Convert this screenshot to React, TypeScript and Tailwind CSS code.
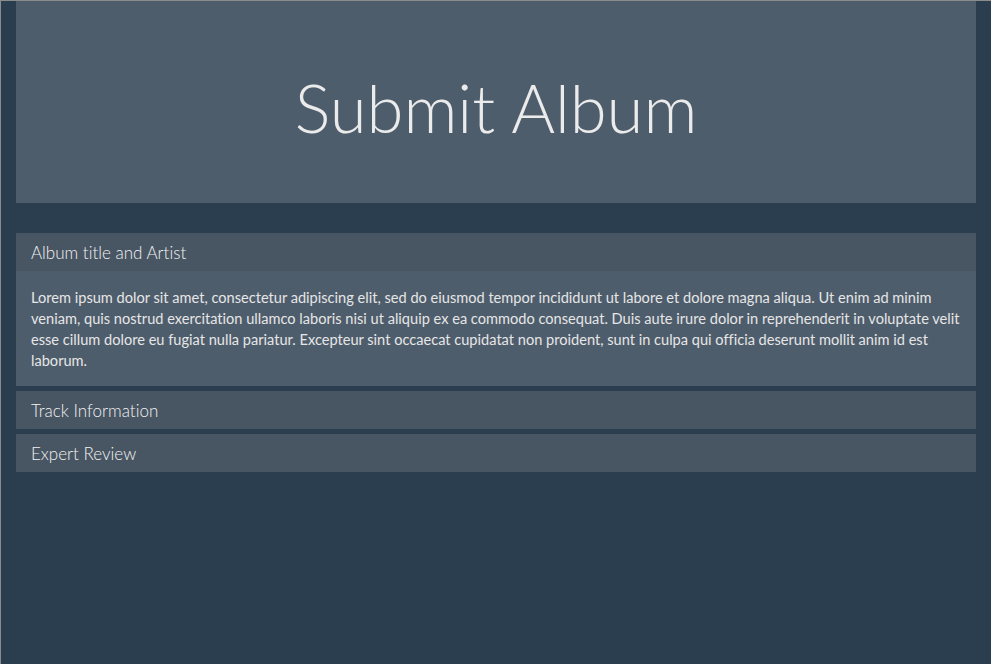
export default function App() {
  const lorem =
    'Lorem ipsum dolor sit amet, consectetur adipiscing elit, sed do eiusmod tempor incididunt ut labore et dolore magna aliqua. Ut enim ad minim veniam, quis nostrud exercitation ullamco laboris nisi ut aliquip ex ea commodo consequat. Duis aute irure dolor in reprehenderit in voluptate velit esse cillum dolore eu fugiat nulla pariatur. Excepteur sint occaecat cupidatat non proident, sunt in culpa qui officia deserunt mollit anim id est laborum.';

  const heading = 'h-[38px] bg-[#485563] px-[15px] pt-[2px] flex items-center text-[17px] font-light text-[#f2f2f2]';

  return (
    <div className="min-h-[664px] bg-[#2b3e50] border-t border-l border-[#8c8c8c] text-[#ebebeb] font-['Lato',sans-serif] [font-variant-ligatures:none]">
      <div className="pl-[15px] pr-[15px]">
        {/* Jumbotron */}
        <div className="h-[202px] bg-[#4e5d6c] flex items-center justify-center">
          <h1 className="text-[67px] font-light leading-none pt-[10px] text-[#ebebeb]">Submit Album</h1>
        </div>

        {/* Accordion */}
        <div className="mt-[30px] flex flex-col gap-[5px]">
          <div className="bg-[#4e5d6c]">
            <div className={heading}>Album title and Artist</div>
            <div className="px-[15px] pt-[16px] pb-[15px] text-[14.6px] leading-[21px] text-[#e6e6e6]">{lorem}</div>
          </div>
          <div className={heading}>Track Information</div>
          <div className={heading}>Expert Review</div>
        </div>
      </div>
    </div>
  );
}
